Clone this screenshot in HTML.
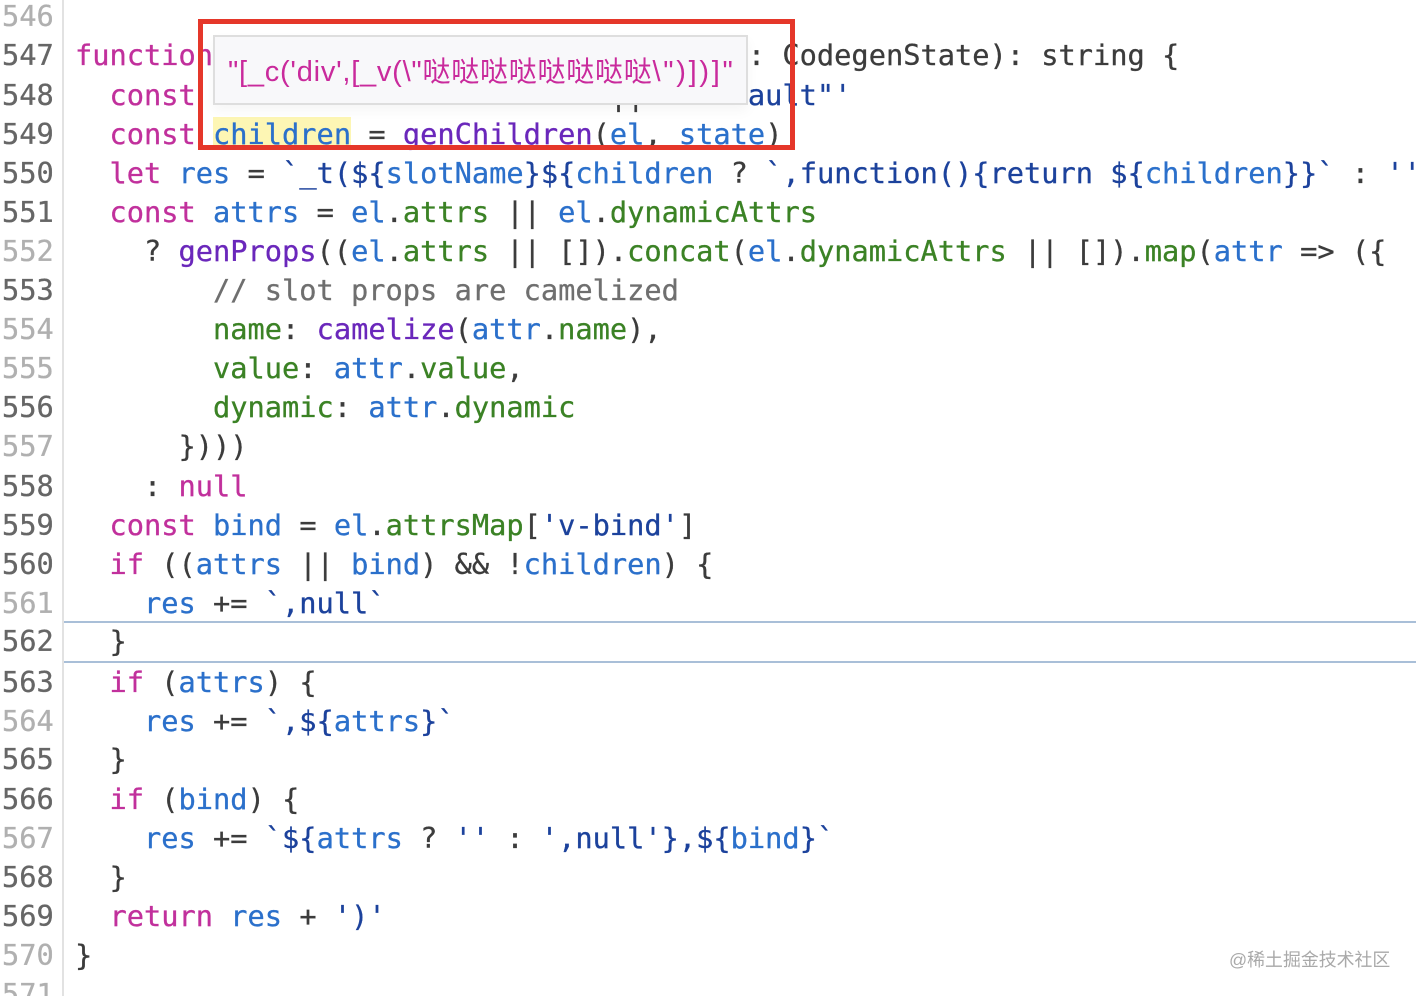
<!DOCTYPE html>
<html><head><meta charset="utf-8">
<style>
html,body{margin:0;padding:0;background:#fff;width:1416px;height:996px;overflow:hidden}
#root{position:relative;width:1416px;height:996px;overflow:hidden;background:#fff}
pre{margin:0;position:absolute;font-family:"DejaVu Sans Mono","Liberation Mono",monospace;font-size:28.67px;line-height:39.125px;white-space:pre;color:#3c3c3c;-webkit-text-stroke:.3px currentColor}
#gut{left:2px;top:-2.9px;color:#666}
#code{left:75px;top:-2.9px;width:1341px;overflow:hidden;height:1000px}
.d{position:relative;top:1px}
.u{position:relative;top:-1px}
.h{visibility:hidden}
.l{color:#b0b0b0}
.k{color:#c1309c}.v{color:#2b70cb}.s{color:#1c429c}.f{color:#6a27bb}.g{color:#3b8225}.c{color:#6f6f6f}
.o{color:#3c3c3c}
#sep{position:absolute;left:62px;top:0;width:2px;height:996px;background:#e2e2e2}
.bl{position:absolute;left:64px;width:1352px;height:2px;background:#a9bfd8}
#hl{position:absolute;left:213px;top:117px;width:138px;height:31px;background:#fdf6b4}
#tip{position:absolute;left:213px;top:35px;width:531px;height:66px;background:#f8f8fa;border:2px solid #dedede;box-shadow:0 6px 12px rgba(0,0,0,.04)}
#tiptxt{position:absolute;left:228px;top:53px;font-family:"Liberation Sans","Noto Sans CJK SC",sans-serif;font-size:29px;line-height:38px;color:#c92a9c;white-space:nowrap;letter-spacing:.76px}
#tiptxt b{font-weight:normal;font-size:28px;letter-spacing:.75px}
#tiptxt i{font-style:normal;letter-spacing:2.7px}
#red{position:absolute;left:198px;top:19px;width:587px;height:121px;border:5px solid #e5372a}
#wm{position:absolute;left:1229px;top:948px;font-family:"Liberation Sans","Noto Sans CJK SC",sans-serif;font-size:17.9px;line-height:24px;color:#a9a9a9;white-space:nowrap}
</style></head>
<body><div id="root">
<div id="sep"></div>
<div class="bl" style="top:621px"></div>
<div class="bl" style="top:661px"></div>
<div id="hl"></div>
<pre id="gut"><span class="l">546</span>
547
<span class="d">548</span>
<span class="d">549</span>
550
551
<span class="l">552</span>
553
<span class="l">554</span>
<span class="l">555</span>
556
<span class="l">557</span>
558
559
560
<span class="l">561</span>
<span class="u">562</span>
<span class="d">563</span>
<span class="l d">564</span>
565
566
<span class="l">567</span>
568
569
<span class="l">570</span>
<span class="l">571</span></pre>
<pre id="code">

<span class="k">function</span> <span class="f">genSlot</span> (<span class="v">el</span>: ASTElement, <span class="v">state</span>: CodegenState): string {
<span class="d">  <span class="k">const</span> <span class="h">slotName = el.slotName</span> || <span class="s"><span class="h">'"def</span>ault"'</span></span>
<span class="d">  <span class="k">const</span> <span class="v">children</span> = <span class="f">genChildren</span>(<span class="v">el</span>, <span class="v">state</span>)</span>
  <span class="k">let</span> <span class="v">res</span> = <span class="s">`_t(${</span><span class="v">slotName</span><span class="s">}${</span><span class="v">children</span> ? <span class="s">`,function(){return ${</span><span class="v">children</span><span class="s">}}`</span> : <span class="s">''</span>
  <span class="k">const</span> <span class="v">attrs</span> = <span class="v">el</span>.<span class="g">attrs</span> || <span class="v">el</span>.<span class="g">dynamicAttrs</span>
    ? <span class="f">genProps</span>((<span class="v">el</span>.<span class="g">attrs</span> || []).<span class="g">concat</span>(<span class="v">el</span>.<span class="g">dynamicAttrs</span> || []).<span class="g">map</span>(<span class="v">attr</span> => ({
        <span class="c">// slot props are camelized</span>
        <span class="g">name</span>: <span class="f">camelize</span>(<span class="v">attr</span>.<span class="g">name</span>),
        <span class="g">value</span>: <span class="v">attr</span>.<span class="g">value</span>,
        <span class="g">dynamic</span>: <span class="v">attr</span>.<span class="g">dynamic</span>
      })))
    : <span class="k">null</span>
  <span class="k">const</span> <span class="v">bind</span> = <span class="v">el</span>.<span class="g">attrsMap</span>[<span class="s">'v-bind'</span>]
  <span class="k">if</span> ((<span class="v">attrs</span> || <span class="v">bind</span>) &amp;&amp; !<span class="v">children</span>) {
    <span class="v">res</span> += <span class="s">`,null`</span>
<span class="u">  }</span>
<span class="d">  <span class="k">if</span> (<span class="v">attrs</span>) {</span>
<span class="d">    <span class="v">res</span> += <span class="s">`,${</span><span class="v">attrs</span><span class="s">}`</span></span>
  }
  <span class="k">if</span> (<span class="v">bind</span>) {
    <span class="v">res</span> += <span class="s">`${</span><span class="v">attrs</span> ? <span class="s">''</span> : <span class="s">',null'</span><span class="s">},${</span><span class="v">bind</span><span class="s">}`</span>
  }
  <span class="k">return</span> <span class="v">res</span> + <span class="s">')'</span>
}</pre>
<div id="tip"></div>
<div id="tiptxt">"[_c('div',[_v(\"<b>哒哒哒哒哒哒哒哒</b><i>\")])]"</i></div>
<div id="red"></div>
<div id="wm">@稀土掘金技术社区</div>
</div></body></html>
